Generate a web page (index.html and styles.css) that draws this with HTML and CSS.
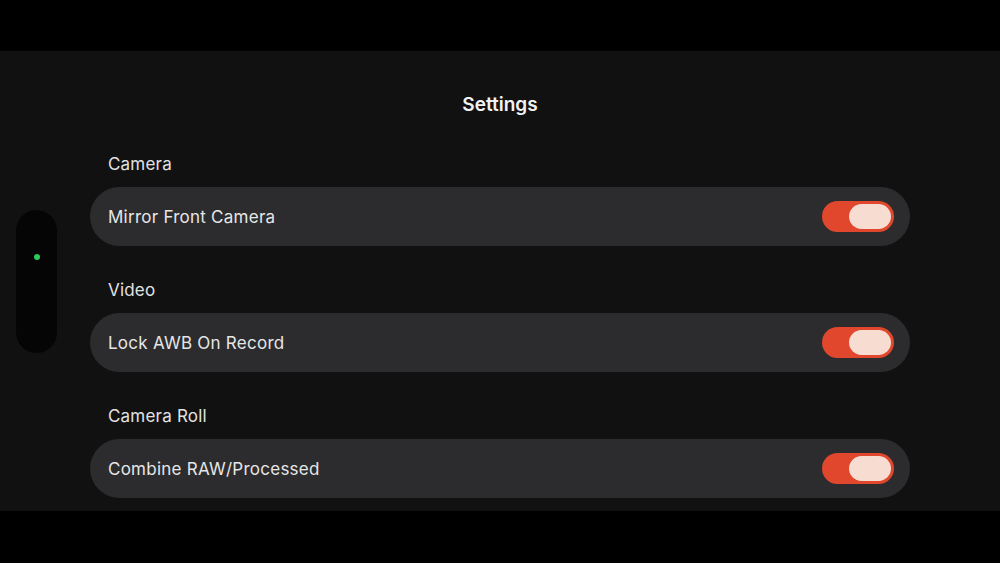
FILE: index.html
```html
<!DOCTYPE html>
<html lang="en">
<head>
  <meta charset="UTF-8" />
  <meta name="viewport" content="width=device-width, initial-scale=1.0"/>
  <title>Settings</title>
  <link rel="stylesheet" href="styles.css">
</head>
<body>

  <div class="screen">
    <!-- Side handle -->
    <div class="side-handle">
      <span class="dot"></span>
    </div>

    <div class="settings">
      <h1>Settings</h1>

      <div class="section">
        <div class="section-title">Camera</div>
        <div class="row">
          <span class="row-label">Mirror Front Camera</span>
          <span class="toggle on"><span class="knob"></span></span>
        </div>
      </div>

      <div class="section">
        <div class="section-title">Video</div>
        <div class="row">
          <span class="row-label">Lock AWB On Record</span>
          <span class="toggle on"><span class="knob"></span></span>
        </div>
      </div>

      <div class="section">
        <div class="section-title">Camera Roll</div>
        <div class="row">
          <span class="row-label">Combine RAW/Processed</span>
          <span class="toggle on"><span class="knob"></span></span>
        </div>
      </div>
    </div>
  </div>

</body>
</html>
```

FILE: styles.css
```css
* {
  margin: 0;
  padding: 0;
  box-sizing: border-box;
  font-family: Inter, 'Noto Sans', sans-serif;
}
body {
  background-color: #000;
  height: 563px;
  overflow: hidden;
}
.screen {
  margin-top: 51px;
  height: 460px;
  background-color: #111111;
  display: flex;
  padding-left: 16px;
}
.side-handle {
  width: 41px;
  height: 143px;
  margin-top: 159px;
  background-color: #050505;
  border-radius: 21px;
  display: flex;
  justify-content: center;
  padding-top: 44px;
}
.dot {
  width: 6px;
  height: 6px;
  border-radius: 50%;
  background-color: #30c85a;
}
.settings {
  width: 820px;
  margin-left: 33px;
  padding-top: 43px;
}
h1 {
  color: #f2f2f2;
  font-size: 19px;
  line-height: 22px;
  font-weight: 600;
  text-align: center;
  margin-bottom: 37px;
}
.section {
  margin-bottom: 33px;
}
.section-title {
  color: #e2e2e2;
  font-size: 17px;
  line-height: 22px;
  letter-spacing: 0.2px;
  padding-left: 18px;
  margin-bottom: 12px;
}
.row {
  height: 59px;
  background-color: #2c2c2e;
  border-radius: 30px;
  display: flex;
  align-items: center;
  justify-content: space-between;
  padding: 0 16px 0 18px;
}
.row-label {
  color: #e6e6e6;
  font-size: 17px;
  letter-spacing: 0.25px;
}
.toggle {
  width: 72px;
  height: 31px;
  border-radius: 16px;
  background-color: #e0472c;
  display: flex;
  align-items: center;
  justify-content: flex-end;
  padding: 0 3px;
}
.knob {
  width: 42px;
  height: 25px;
  border-radius: 13px;
  background-color: #f7ddd1;
}
```
